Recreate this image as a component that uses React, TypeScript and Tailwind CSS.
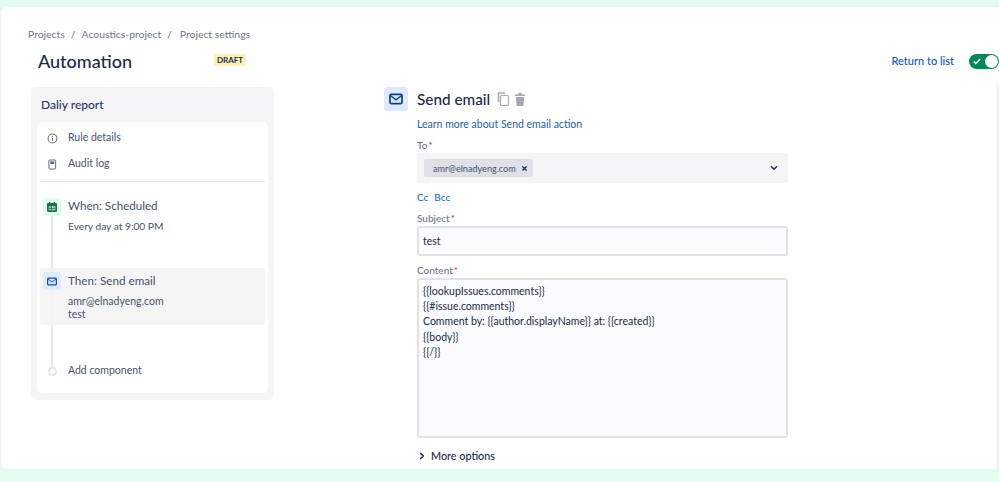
import { LuChevronDown, LuChevronRight } from "react-icons/lu";

const font = "font-['Lato','Noto_Sans',sans-serif]";

const MailIcon = ({ className }: { className?: string }) => (
  <svg viewBox="0 0 16 14" className={className} fill="none" stroke="currentColor" strokeWidth="2">
    <rect x="1" y="1.5" width="14" height="11" rx="1.5" />
    <path d="M1.5 3l6.5 5 6.5-5" strokeWidth="1.6" />
  </svg>
);

const CalendarIcon = () => (
  <svg viewBox="0 0 12 12" className="w-[10px] h-[10px] text-[#216e4e]" fill="currentColor">
    <rect x="2.5" y="0" width="1.6" height="2.4" />
    <rect x="7.9" y="0" width="1.6" height="2.4" />
    <path d="M1.5 1.2h9A1.5 1.5 0 0 1 12 2.7v7.8a1.5 1.5 0 0 1-1.5 1.5h-9A1.5 1.5 0 0 1 0 10.5V2.7a1.5 1.5 0 0 1 1.5-1.5z" />
    <rect x="2" y="5" width="8" height="5" fill="#8fd0b0" />
    <rect x="4.8" y="5" width="0.8" height="5" />
    <rect x="2" y="7.2" width="8" height="0.8" />
  </svg>
);

const SideRow = ({ label, icon }: { label: string; icon: React.ReactNode }) => (
  <div className="flex items-center h-[26px] text-[#5e6c84]">
    <div className="w-[25px] flex justify-center">{icon}</div>
    <span className="text-[10.5px] ml-[3px] text-[#44546f]">{label}</span>
  </div>
);

const FieldLabel = ({ label }: { label: string }) => (
  <div className="text-[10px] leading-[12px] font-medium text-[#6b778c]">
    {label}
    <span className="text-[#c9372c] ml-[1px]">*</span>
  </div>
);

export default function App() {
  return (
    <div className={`${font} w-[999px] h-[482px] overflow-hidden bg-[#e3fcef] pt-[7px] pb-[13px] pl-[1px]`}>
      <div className="relative h-full bg-white rounded-tl-[6px] rounded-bl-[6px] flex flex-col overflow-hidden">
        <div className="flex gap-[6px] pl-[27px] pt-[20px] text-[10.4px] leading-[14px] text-[#6b778c]">
          <span>Projects</span>
          <span>/</span>
          <span>Acoustics-project</span>
          <span>/</span>
          <span className="ml-[2px]">Project settings</span>
        </div>

        <div className="flex items-center pl-[37px] mt-[6px] h-[28px]">
          <h1 className="text-[18px] font-medium text-[#172b4d] w-[176px]">Automation</h1>
          <span className="bg-[#fff0b3] text-[#172b4d] text-[8px] font-bold px-[3px] h-[12px] leading-[12px] rounded-[2px] mb-[2px]">
            DRAFT
          </span>
          <a className="ml-auto text-[11px] font-medium text-[#0c55cf]">Return to list</a>
          <div className="relative z-10 ml-[15px] w-[30px] h-[15px] rounded-full bg-[#00875a] flex items-center justify-between pl-[4px] pr-[1px]">
            <svg viewBox="0 0 10 8" className="w-[8px] h-[7px]" fill="none" stroke="white" strokeWidth="1.8">
              <path d="M1 4l2.5 2.5L9 1" />
            </svg>
            <div className="w-[13px] h-[13px] rounded-full bg-white" />
          </div>
        </div>

        <div className="flex mt-[12px]">
          <aside className="ml-[30px] w-[243px] h-[313px] bg-[#f4f5f7] rounded-[5px] px-[6px] shrink-0">
            <div className="h-[35px] pl-[4px] flex items-center text-[12px] font-medium text-[#253858]">Daliy report</div>
            <div className="h-[271px] bg-white rounded-[5px] px-[3px] pt-[3px]">
              <SideRow
                label="Rule details"
                icon={
                  <svg viewBox="0 0 12 12" className="w-[11px] h-[11px]" fill="none" stroke="currentColor" strokeWidth="1.1">
                    <circle cx="6" cy="6" r="4.8" />
                    <path d="M6 5.4v3M6 3.2v1.1" />
                  </svg>
                }
              />
              <SideRow
                label="Audit log"
                icon={
                  <svg viewBox="0 0 10 12" className="w-[9px] h-[11px]" fill="none" stroke="currentColor" strokeWidth="1.1">
                    <rect x="1" y="1" width="7.5" height="10" rx="0.8" />
                    <rect x="2.5" y="2.5" width="4.5" height="3" fill="currentColor" stroke="none" />
                  </svg>
                }
              />
              <div className="h-px bg-[#e6e8eb] mt-[4px]" />

              <div className="relative mt-[16px] h-[190px]">
                <div className="absolute left-[11px] top-[10px] w-[2px] h-[160px] bg-[#e4e6ee]" />
                <div className="relative flex h-[62px] pl-[3px]">
                  <div className="w-[18px] h-[18px] rounded-[3px] bg-[#dffcf0] flex items-center justify-center">
                    <CalendarIcon />
                  </div>
                  <div className="ml-[7px] text-[#44546f]">
                    <div className="text-[11.6px] leading-[16px]">When: Scheduled</div>
                    <div className="text-[10.2px] leading-[14px] mt-[5px]">Every day at 9:00 PM</div>
                  </div>
                </div>
                <div className="relative flex h-[57px] mt-[8px] bg-[#f4f4f4]/90 rounded-[3px] pl-[3px] pt-[4px]">
                  <div className="w-[18px] h-[18px] rounded-[3px] bg-[#deebff] flex items-center justify-center">
                    <MailIcon className="w-[10px] h-[9px] text-[#0c4fb8]" />
                  </div>
                  <div className="ml-[7px] text-[#44546f]">
                    <div className="text-[11.7px] leading-[16px]">Then: Send email</div>
                    <div className="text-[10.5px] leading-[14px] mt-[6px]">amr@elnadyeng.com</div>
                    <div className="text-[10.5px] leading-[13px]">test</div>
                  </div>
                </div>
                <div className="relative flex items-center mt-[38px] pl-[8px] h-[16px]">
                  <div className="w-[9px] h-[9px] rounded-full border-2 border-[#e4e6ee] bg-white" />
                  <span className="ml-[11px] text-[10.5px] text-[#44546f]">Add component</span>
                </div>
              </div>
            </div>
          </aside>

          <main className="flex-1 ml-[110px] flex items-start">
            <div className="w-[24px] h-[24px] rounded-[3px] bg-[#deebff] flex items-center justify-center">
              <MailIcon className="w-[14px] h-[12px] text-[#0c3f92]" />
            </div>
            <div className="ml-[9px] w-[371px]">
              <div className="flex items-center h-[24px]">
                <h2 className="text-[15.3px] font-medium text-[#172b4d]">Send email</h2>
                <svg viewBox="0 0 12 14" className="w-[12px] h-[14px] ml-[7px]" fill="none" stroke="#a5adba" strokeWidth="1.2">
                  <rect x="3.5" y="3.5" width="8" height="10" rx="1" />
                  <path d="M8 1H1.5v9" strokeWidth="1.6" />
                </svg>
                <svg viewBox="0 0 12 14" className="w-[12px] h-[13px] ml-[5px]" fill="#a0a8b5">
                  <rect x="0.5" y="1.5" width="11" height="1.8" rx="0.6" />
                  <rect x="4" y="0" width="4" height="2" rx="0.5" />
                  <path d="M1.5 4.2h9l-.7 9a1 1 0 0 1-1 .8H3.2a1 1 0 0 1-1-.8z" />
                </svg>
              </div>
              <a className="block mt-[6px] text-[10.5px] leading-[14px] text-[#1a5fc8]">Learn more about Send email action</a>

              <div className="mt-[8px]">
                <FieldLabel label="To" />
              </div>
              <div className="mt-[2px] h-[30px] bg-[#f4f5f7] rounded-[3px] flex items-center pl-[7px] pr-[9px]">
                <div className="h-[18px] bg-[#dfe1e6] rounded-[2px] flex items-center pl-[9px] pr-[6px] text-[9.1px] text-[#44546f]">
                  <span className="pt-[1px]">amr@elnadyeng.com</span>
                  <svg viewBox="0 0 6 6" className="ml-[6px] w-[5px] h-[5px]" fill="none" stroke="#172b4d" strokeWidth="1.5">
                    <path d="M0.5 0.5l5 5M5.5 0.5l-5 5" />
                  </svg>
                </div>
                <LuChevronDown className="ml-auto w-[10px] h-[10px] text-[#172b4d]" strokeWidth={3.5} />
              </div>

              <div className="flex gap-[6px] mt-[7px] text-[10px] leading-[14px] text-[#0c66e4]">
                <span>Cc</span>
                <span>Bcc</span>
              </div>

              <div className="mt-[8px]">
                <FieldLabel label="Subject" />
              </div>
              <div className="mt-[2px] h-[30px] bg-[#fafbfc] border-2 border-[#dfe1e6] rounded-[3px] px-[4px] pt-[1px] flex items-center text-[10.5px] text-[#172b4d]">
                test
              </div>

              <div className="mt-[8px]">
                <FieldLabel label="Content" />
              </div>
              <div className="mt-[2px] h-[160px] bg-[#fafbfc] border-2 border-[#dfe1e6] rounded-[3px] px-[4px] pt-[4px] text-[10.5px] leading-[15.2px] text-[#172b4d]">
                <div>{"{{lookupIssues.comments}}"}</div>
                <div>{"{{#issue.comments}}"}</div>
                <div>{"Comment by: {{author.displayName}} at: {{created}}"}</div>
                <div>{"{{body}}"}</div>
                <div>{"{{/}}"}</div>
              </div>

              <div className="flex items-center mt-[10px] text-[10.8px] font-medium text-[#172b4d]">
                <LuChevronRight className="w-[10px] h-[10px]" strokeWidth={4} />
                <span className="ml-[4px]">More options</span>
              </div>
            </div>
          </main>
        </div>

        <div className="absolute right-0 top-[78px] bottom-0 w-[2px] bg-[#eeeeee]" />
      </div>
    </div>
  );
}
